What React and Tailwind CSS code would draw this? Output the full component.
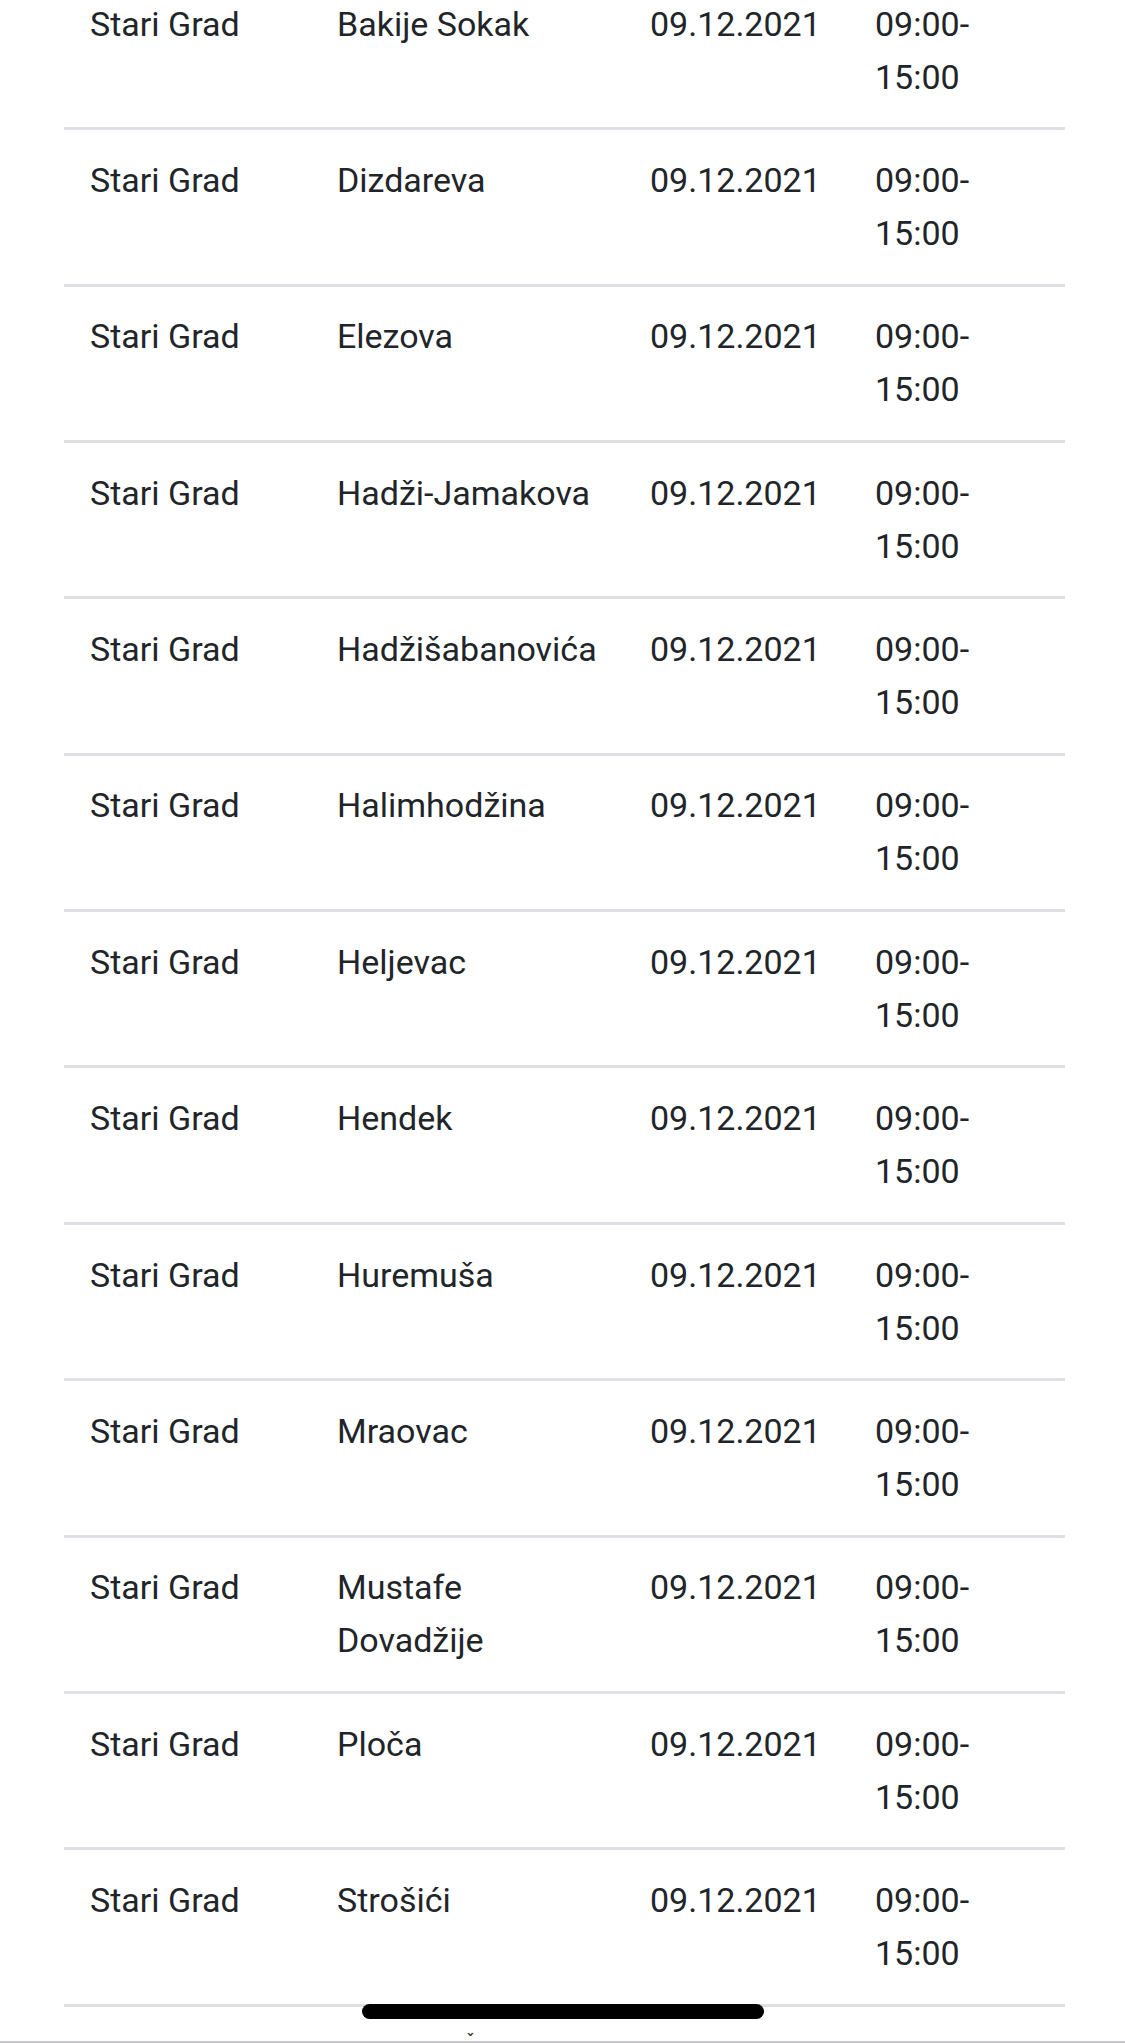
import React from "react";

const streets = [
  "Bakije Sokak",
  "Dizdareva",
  "Elezova",
  "Hadži-Jamakova",
  "Hadžišabanovića",
  "Halimhodžina",
  "Heljevac",
  "Hendek",
  "Huremuša",
  "Mraovac",
  "Mustafe Dovadžije",
  "Ploča",
  "Strošići",
];

function Row({ street }) {
  return (
    <div className="grid grid-cols-[247px_313px_225px_216px] border-b-[3px] border-[#dfe0e5] leading-[53px]">
      <div className="pl-[26px] pr-[16px] py-[23.7px]">Stari Grad</div>
      <div className="pl-[26px] pr-[17px] py-[23.7px]">{street}</div>
      <div className="pl-[26px] pr-[10px] py-[23.7px] whitespace-nowrap">09.12.2021</div>
      <div className="pl-[26px] pr-[26px] py-[23.7px]">09:00-15:00</div>
    </div>
  );
}

export default function App() {
  return (
    <div
      className="relative w-[1125px] h-[2043px] overflow-hidden bg-white text-[34px] text-[#212529]"
      style={{ fontFamily: "Roboto, 'Noto Sans', sans-serif" }}
    >
      <div className="ml-[64px] w-[1001px] -mt-[26.2px]">
        {streets.map((s) => (
          <Row key={s} street={s} />
        ))}
      </div>
      <div className="absolute left-[362px] top-[2004px] w-[402px] h-[15px] rounded-full bg-black" />
      <div className="absolute left-[466px] top-[2031px] text-[20px] leading-none text-[#212529]">ˇ</div>
      <div className="absolute left-0 right-0 bottom-0 h-[2px] bg-[#c9c9cc]" />
    </div>
  );
}
